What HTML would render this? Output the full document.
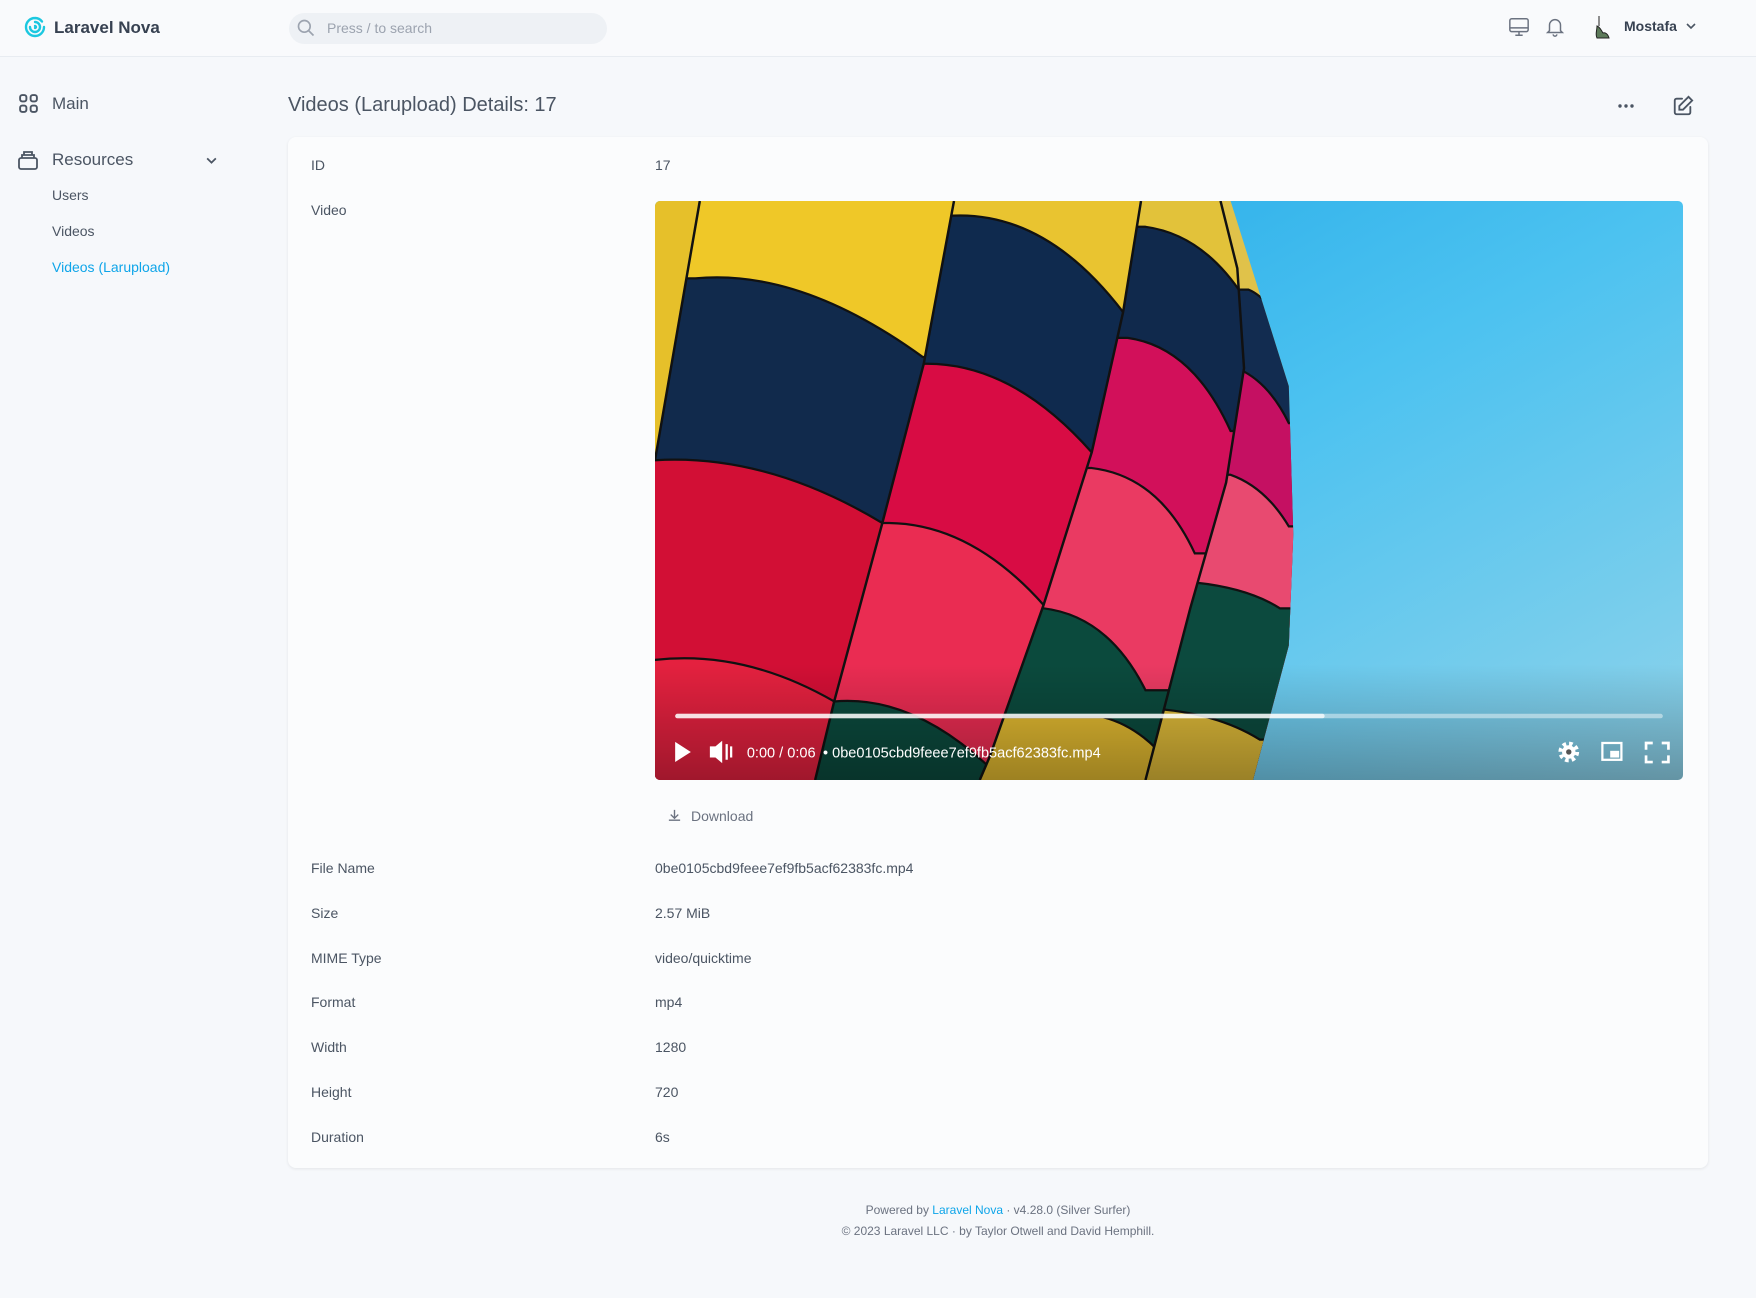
<!DOCTYPE html>
<html><head><meta charset="utf-8"><style>
*{box-sizing:border-box;margin:0;padding:0}
body{width:1756px;height:1298px;background:#f6f8fb;font-family:"Liberation Sans",sans-serif;color:#4b5563;position:relative;overflow:hidden}
.a{position:absolute;white-space:nowrap}
.hdr{position:absolute;left:0;top:0;width:1756px;height:57px;background:#f9fafc;border-bottom:1px solid #e8ecf1}
.card{position:absolute;left:288px;top:137px;width:1420px;height:1031px;background:#fbfcfd;border-radius:8px;box-shadow:0 1px 3px rgba(0,0,0,.08)}
.lbl{font-size:14px;color:#4b5563}
.val{font-size:14px;color:#4b5563}
</style></head><body>
<div class="hdr"></div>
<svg class="a" style="left:23px;top:15px" width="24" height="24" viewBox="0 0 24 24" fill="none" stroke="#1cc8e0" stroke-width="2.4" stroke-linecap="round"><path d="M12 3a9 9 0 1 0 9 9M12 3a9 9 0 0 1 7 3.5M12 21a9 9 0 0 1-8-5M12 7a5 5 0 1 1-5 5M12 11a1 1 0 1 1 0 2"/></svg>
<div class="a" style="left:54px;top:18px;font-size:17px;font-weight:bold;color:#374151">Laravel Nova</div>
<div class="a" style="left:289px;top:13px;width:318px;height:31px;border-radius:16px;background:#eef1f5"></div>
<svg class="a" style="left:296px;top:18px" width="20" height="20" viewBox="0 0 24 24" fill="none" stroke="#9ca3af" stroke-width="2"><circle cx="10" cy="10" r="7"/><path d="M15 15l6 6"/></svg>
<div class="a" style="left:327px;top:20px;font-size:14px;color:#9ca3af">Press / to search</div>
<svg class="a" style="left:1508px;top:16px" width="22" height="22" viewBox="0 0 24 24" fill="none" stroke="#6b7280" stroke-width="1.6"><rect x="2" y="3" width="20" height="14" rx="2"/><path d="M2 13h20M8 21h8M12 17v4"/></svg>
<svg class="a" style="left:1544px;top:16px" width="22" height="22" viewBox="0 0 24 24" fill="none" stroke="#6b7280" stroke-width="1.6"><path d="M6 16V10a6 6 0 0 1 12 0v6l2 2H4zM10 20a2 2 0 0 0 4 0"/></svg>
<svg class="a" style="left:1593px;top:14px" width="18" height="26" viewBox="0 0 18 26"><path d="M6 2v10M4 12c0 5-2 8 0 12h12c-1-4-4-6-6-5-2-3-3-6-6-7z" fill="#5d7a5a" stroke="#222" stroke-width="1"/></svg>
<div class="a" style="left:1624px;top:18px;font-size:14px;font-weight:bold;color:#374151">Mostafa</div>
<svg class="a" style="left:1685px;top:20px" width="12" height="12" viewBox="0 0 12 12" fill="none" stroke="#4b5563" stroke-width="1.6"><path d="M2 4l4 4 4-4"/></svg>

<svg class="a" style="left:18px;top:93px" width="21" height="21" viewBox="0 0 20 20" fill="none" stroke="#4b5563" stroke-width="1.8"><rect x="2" y="2" width="6" height="6" rx="2"/><rect x="12" y="2" width="6" height="6" rx="2"/><rect x="2" y="12" width="6" height="6" rx="2"/><rect x="12" y="12" width="6" height="6" rx="2"/></svg>
<div class="a" style="left:52px;top:94px;font-size:17px">Main</div>
<svg class="a" style="left:17px;top:149px" width="22" height="22" viewBox="0 0 22 22" fill="none" stroke="#4b5563" stroke-width="1.8"><rect x="2" y="9" width="18" height="11" rx="2"/><path d="M5 9V6h12v3M7 6V3h8v3"/></svg>
<div class="a" style="left:52px;top:150px;font-size:17px">Resources</div>
<svg class="a" style="left:205px;top:154px" width="13" height="13" viewBox="0 0 12 12" fill="none" stroke="#4b5563" stroke-width="1.6"><path d="M2 4l4 4 4-4"/></svg>
<div class="a" style="left:52px;top:187px;font-size:14px">Users</div>
<div class="a" style="left:52px;top:223px;font-size:14px">Videos</div>
<div class="a" style="left:52px;top:259px;font-size:14px;color:#0ea5e9">Videos (Larupload)</div>

<div class="a" style="left:288px;top:94px;font-size:20px;color:#4b5563">Videos (Larupload) Details: 17</div>
<svg class="a" style="left:1616px;top:101px" width="20" height="10" viewBox="0 0 20 10" fill="#4b5563"><circle cx="4" cy="5" r="1.7"/><circle cx="10" cy="5" r="1.7"/><circle cx="16" cy="5" r="1.7"/></svg>
<svg class="a" style="left:1672px;top:95px" width="22" height="22" viewBox="0 0 24 24" fill="none" stroke="#4b5563" stroke-width="2" stroke-linecap="round"><path d="M11 4H5a2 2 0 0 0-2 2v13a2 2 0 0 0 2 2h13a2 2 0 0 0 2-2v-6M18 2l4 4-10 10H8v-4z"/></svg>

<div class="card"></div>
<div class="a lbl" style="left:311px;top:157px">ID</div><div class="a val" style="left:655px;top:157px">17</div>
<div class="a lbl" style="left:311px;top:202px">Video</div>

<svg class="a" style="left:655px;top:201px;border-radius:5px" width="1028" height="579" viewBox="0 0 918 516" preserveAspectRatio="none">
<defs>
<linearGradient id="sky" x1="0" y1="0" x2="1" y2="1"><stop offset="0" stop-color="#1aa4e6"/><stop offset=".5" stop-color="#4cc2f0"/><stop offset="1" stop-color="#8fd3ea"/></linearGradient>
<clipPath id="g1"><path d="M40,0 L267,0 L240,145 L203,287 L160,446 L143,516 L0,516 L0,231Z"/></clipPath>
<clipPath id="g2"><path d="M267,0 L434,0 L418,99 L390,224 L347,360 L299,495 L290,516 L143,516 L160,446 L203,287 L240,145Z"/></clipPath>
<clipPath id="g3"><path d="M434,0 L505,0 L520,60 L526,149 L510,251 L478,363 L438,516 L290,516 L299,495 L347,360 L390,224 L418,99Z"/></clipPath>
<clipPath id="g4"><path d="M505,0 L514,0 L566,165 L570,297 L566,396 L534,516 L438,516 L478,363 L510,251 L526,149 L520,60Z"/></clipPath>
<linearGradient id="shade" x1="0" y1="0" x2="0" y2="1"><stop offset=".8" stop-color="#000" stop-opacity="0"/><stop offset="1" stop-color="#000" stop-opacity=".3"/></linearGradient>
</defs>
<rect width="918" height="516" fill="url(#sky)"/>
<path d="M0,0 L40,0 L0,231Z" fill="#e6c02a"/>
<g clip-path="url(#g1)" stroke="#111" stroke-width="2">
<rect width="300" height="516" fill="#efc828" stroke="none"/>
<path d="M-100,69 L36,69 Q130,60 239,139 L400,139 L400,700 L-100,700Z" fill="#112a4c"/>
<path d="M-100,231 L0,231 Q100,225 203,287 L400,287 L400,700 L-100,700Z" fill="#d20f35"/>
<path d="M-100,409 L0,409 Q80,400 160,446 L400,446 L400,700 L-100,700Z" fill="#e4213f"/>
</g>
<g clip-path="url(#g2)" stroke="#111" stroke-width="2">
<rect x="100" width="400" height="516" fill="#e9c430" stroke="none"/>
<path d="M100,13 L267,13 Q350,10 418,99 L600,99 L600,700 L100,700Z" fill="#0f2a4e"/>
<path d="M100,145 L243,145 Q320,145 390,224 L600,224 L600,700 L100,700Z" fill="#d80c44"/>
<path d="M100,287 L203,287 Q280,285 347,360 L600,360 L600,700 L100,700Z" fill="#ea2c52"/>
<path d="M100,446 L160,446 Q230,440 299,505 L600,505 L600,700 L100,700Z" fill="#0b4a3d"/>
</g>
<g clip-path="url(#g3)" stroke="#111" stroke-width="2">
<rect x="250" width="350" height="516" fill="#e2c23a" stroke="none"/>
<path d="M250,23 L438,23 Q490,30 526,86 L700,86 L700,700 L250,700Z" fill="#10294c"/>
<path d="M250,122 L422,122 Q480,130 514,205 L700,205 L700,700 L250,700Z" fill="#d2105a"/>
<path d="M250,238 L390,238 Q450,245 482,314 L700,314 L700,700 L250,700Z" fill="#ea3a62"/>
<path d="M250,363 L347,363 Q405,370 438,436 L700,436 L700,700 L250,700Z" fill="#0b4a3d"/>
<path d="M250,460 L400,460 Q440,470 470,516 L700,516 L700,700 L250,700Z" fill="#e0b830"/>
</g>
<g clip-path="url(#g4)" stroke="#111" stroke-width="2">
<rect x="400" width="200" height="516" fill="#e0c24a" stroke="none"/>
<path d="M400,79 L530,79 Q545,85 560,110 L700,110 L700,700 L400,700Z" fill="#122c50"/>
<path d="M400,152 L526,152 Q550,165 566,198 L700,198 L700,700 L400,700Z" fill="#c51062"/>
<path d="M400,244 L514,244 Q545,255 566,290 L700,290 L700,700 L400,700Z" fill="#e84a70"/>
<path d="M400,340 L482,340 Q530,345 558,363 L700,363 L700,700 L400,700Z" fill="#0c4a3e"/>
<path d="M400,452 L438,452 Q500,455 540,480 L700,480 L700,700 L400,700Z" fill="#dcb838"/>
</g>
<g stroke="#111" stroke-width="2.2" fill="none">
<path d="M40,0 L0,231"/><path d="M267,0 L240,145 L203,287 L160,446 L143,516"/>
<path d="M434,0 L418,99 L390,224 L347,360 L299,495 L290,516"/>
<path d="M505,0 L520,60 L526,149 L510,251 L478,363 L438,516"/>
</g>
<rect width="918" height="516" fill="url(#shade)"/>
<rect x="18" y="457" width="882" height="4" rx="2" fill="#ffffff" opacity=".45"/>
<rect x="18" y="457" width="580" height="4" rx="2" fill="#ffffff" opacity=".75"/>
<path d="M18,482 L32,491 L18,500Z" fill="#fff"/>
<path d="M49,486h5l6-5v20l-6-5h-5z" fill="#fff"/><path d="M64,484v14M68,486v10" stroke="#fff" stroke-width="2"/>
<text x="82" y="496" font-size="13" fill="#fff" font-family="Liberation Sans">0:00 / 0:06</text>
<text x="150" y="496" font-size="13" fill="#fff" font-family="Liberation Sans">• 0be0105cbd9feee7ef9fb5acf62383fc.mp4</text>
<circle cx="816" cy="491" r="7.5" fill="none" stroke="#fff" stroke-width="3.5" stroke-dasharray="3.2 2.7"/><circle cx="816" cy="491" r="6" fill="#fff"/><circle cx="816" cy="491" r="2.4" fill="#555"/>
<rect x="846" y="483" width="17" height="15" fill="none" stroke="#fff" stroke-width="2"/><rect x="853" y="490" width="8" height="6" fill="#fff"/>
<path d="M885,489v-6h6M899,483h6v6M905,494v6h-6M891,500h-6v-6" stroke="#fff" stroke-width="2.4" fill="none"/>
</svg>

<svg class="a" style="left:667px;top:808px" width="15" height="15" viewBox="0 0 16 16" fill="none" stroke="#6b7280" stroke-width="1.5"><path d="M8 2v9M4 7l4 4 4-4M2 13h12"/></svg>
<div class="a" style="left:691px;top:808px;font-size:14px;color:#6b7280">Download</div>

<div class="a lbl" style="left:311px;top:860px">File Name</div><div class="a val" style="left:655px;top:860px">0be0105cbd9feee7ef9fb5acf62383fc.mp4</div>
<div class="a lbl" style="left:311px;top:905px">Size</div><div class="a val" style="left:655px;top:905px">2.57 MiB</div>
<div class="a lbl" style="left:311px;top:950px">MIME Type</div><div class="a val" style="left:655px;top:950px">video/quicktime</div>
<div class="a lbl" style="left:311px;top:994px">Format</div><div class="a val" style="left:655px;top:994px">mp4</div>
<div class="a lbl" style="left:311px;top:1039px">Width</div><div class="a val" style="left:655px;top:1039px">1280</div>
<div class="a lbl" style="left:311px;top:1084px">Height</div><div class="a val" style="left:655px;top:1084px">720</div>
<div class="a lbl" style="left:311px;top:1129px">Duration</div><div class="a val" style="left:655px;top:1129px">6s</div>

<div class="a" style="left:0;width:1996px;top:1203px;text-align:center;font-size:12px;color:#6b7280">Powered by <span style="color:#0ea5e9">Laravel Nova</span> · v4.28.0 (Silver Surfer)</div>
<div class="a" style="left:0;width:1996px;top:1224px;text-align:center;font-size:12px;color:#6b7280">© 2023 Laravel LLC · by Taylor Otwell and David Hemphill.</div>
</body></html>
